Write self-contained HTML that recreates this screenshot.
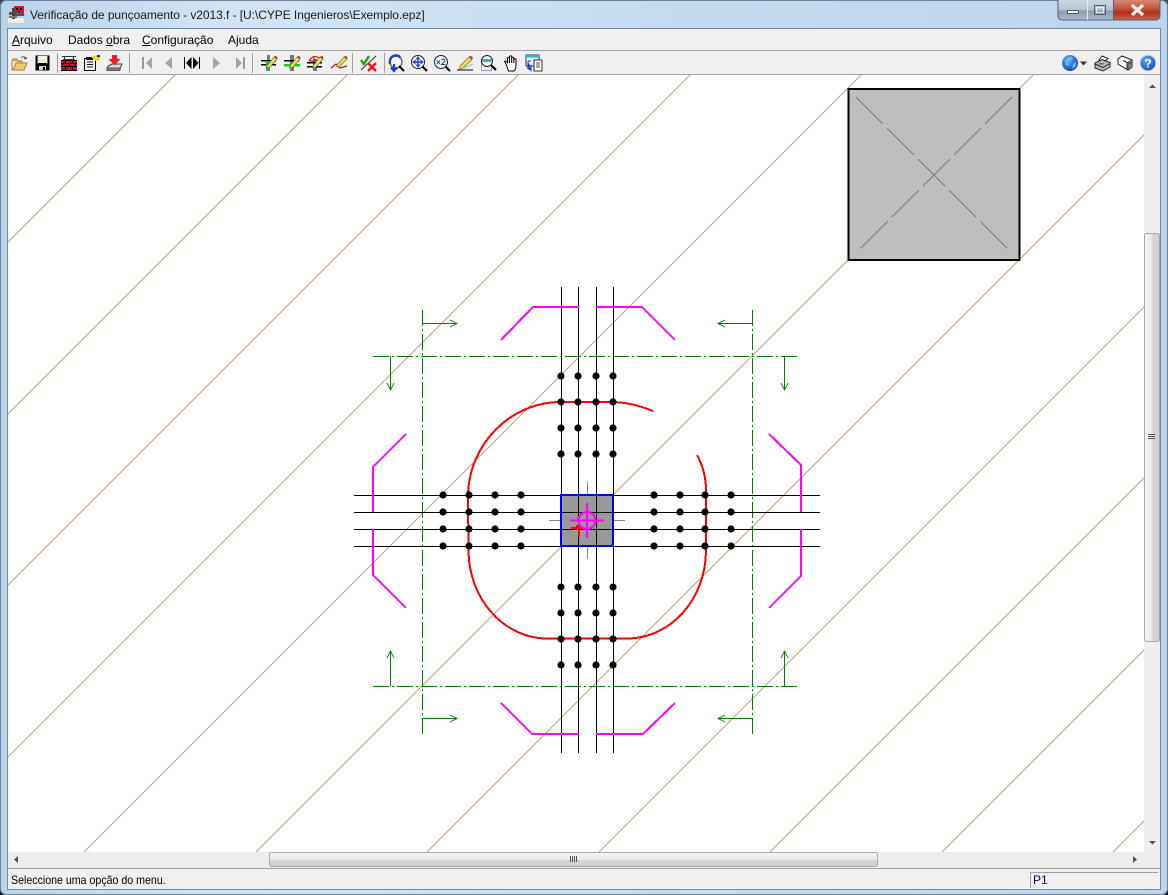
<!DOCTYPE html>
<html><head><meta charset="utf-8"><title>Verificação de punçoamento</title>
<style>
html,body{margin:0;padding:0;width:1168px;height:895px;overflow:hidden;background:#000}
#w{position:absolute;left:0;top:0;width:1168px;height:895px;overflow:hidden;font-family:"Liberation Sans",sans-serif;font-size:12px;color:#000}
.t{position:absolute;white-space:nowrap;line-height:14px}
u{text-decoration:underline}
svg{position:absolute;left:0;top:0}
</style></head><body><div id="w">
<svg width="1168" height="895" viewBox="0 0 1168 895">
<defs>
<linearGradient id="tb" x1="0" x2="1" y1="0" y2="0"><stop offset="0" stop-color="#b9d2ea"/><stop offset=".2" stop-color="#d3e5f5"/><stop offset=".6" stop-color="#c4daef"/><stop offset="1" stop-color="#bdd5ec"/></linearGradient>
<linearGradient id="bt" x1="0" x2="0" y1="0" y2="1"><stop offset="0" stop-color="#cdd7e2"/><stop offset=".5" stop-color="#b4c2d1"/><stop offset=".55" stop-color="#8c9db0"/><stop offset="1" stop-color="#a9bacd"/></linearGradient>
<linearGradient id="cl" x1="0" x2="0" y1="0" y2="1"><stop offset="0" stop-color="#d68a76"/><stop offset=".5" stop-color="#c4472f"/><stop offset=".6" stop-color="#ae2c1a"/><stop offset="1" stop-color="#cf6248"/></linearGradient>
<linearGradient id="th" x1="0" x2="0" y1="0" y2="1"><stop offset="0" stop-color="#f6f6f6"/><stop offset=".5" stop-color="#e8e8e8"/><stop offset=".55" stop-color="#d6d6d6"/><stop offset="1" stop-color="#cfcfcf"/></linearGradient>
<linearGradient id="tv" x1="0" x2="1" y1="0" y2="0"><stop offset="0" stop-color="#f6f6f6"/><stop offset=".5" stop-color="#e8e8e8"/><stop offset=".55" stop-color="#d6d6d6"/><stop offset="1" stop-color="#cfcfcf"/></linearGradient>
<radialGradient id="gl" cx=".4" cy=".3" r=".8"><stop offset="0" stop-color="#5ab0f5"/><stop offset="1" stop-color="#0a3fb0"/></radialGradient>
<clipPath id="cv"><rect x="8" y="75" width="1136" height="777"/></clipPath>
</defs>

<!-- window frame -->
<rect x="0" y="0" width="1168" height="895" rx="6" fill="url(#tb)"/>
<rect x=".5" y=".5" width="1167" height="894" rx="6" fill="none" stroke="#6f8298"/>
<rect x="7" y="28" width="1154" height="862" fill="#6f8ba5"/>
<rect x="8" y="29" width="1152" height="860" fill="#f0f0f0"/>
<!-- canvas -->
<rect x="8" y="75" width="1136" height="777" fill="#fff"/>
<!-- menu/tool separators -->
<g shape-rendering="crispEdges">
<rect x="8" y="50" width="1152" height="1" fill="#a3a3a3"/>
<rect x="8" y="74" width="1152" height="1" fill="#a3a3a3"/>
<rect x="57" y="53" width="1" height="20" fill="#a0a0a0"/>
<rect x="129" y="53" width="1" height="20" fill="#a0a0a0"/>
<rect x="252" y="53" width="1" height="20" fill="#a0a0a0"/>
<rect x="352" y="53" width="1" height="20" fill="#a0a0a0"/>
<rect x="384" y="53" width="1" height="20" fill="#a0a0a0"/>
</g>

<!-- diagonals -->
<g clip-path="url(#cv)" stroke="#c8a27c" stroke-width="1" shape-rendering="crispEdges">
<line x1="175" y1="75" x2="-602" y2="852"/>
<line x1="347" y1="75" x2="-430" y2="852"/>
<line x1="518" y1="75" x2="-259" y2="852"/>
<line x1="690" y1="75" x2="-87" y2="852"/>
<line x1="861" y1="75" x2="84" y2="852"/>
<line x1="1033" y1="75" x2="256" y2="852"/>
<line x1="1204" y1="75" x2="427" y2="852"/>
<line x1="1376" y1="75" x2="599" y2="852"/>
<line x1="1547" y1="75" x2="770" y2="852"/>
<line x1="1719" y1="75" x2="942" y2="852"/>
<line x1="1890" y1="75" x2="1113" y2="852"/>
</g>

<!-- column detail square -->
<rect x="848.5" y="89" width="171" height="171" fill="#bebebe" stroke="#000" stroke-width="2" shape-rendering="crispEdges"/>
<g stroke="#7a7a7a" stroke-width="1" stroke-dasharray="38 6" shape-rendering="crispEdges">
<line x1="856" y1="97" x2="1012" y2="253"/>
<line x1="1012" y1="97" x2="856" y2="253"/>
</g>

<!-- green section lines -->
<g fill="none" stroke="#008000" stroke-width="1" shape-rendering="crispEdges">
<line x1="422.5" y1="310" x2="422.5" y2="736" stroke-dasharray="16 3 2 3"/>
<line x1="752.5" y1="310" x2="752.5" y2="736" stroke-dasharray="16 3 2 3"/>
<line x1="373" y1="356.5" x2="799" y2="356.5" stroke-dasharray="16 3 2 3"/>
<line x1="373" y1="686.5" x2="799" y2="686.5" stroke-dasharray="16 3 2 3"/>
<path d="M422 323.5H457M450 320l7 3.5-7 3.5"/>
<path d="M752 323.5H718M725 320l-7 3.5 7 3.5"/>
<path d="M422 718.5H457M450 715l7 3.5-7 3.5"/>
<path d="M752 718.5H718M725 715l-7 3.5 7 3.5"/>
<path d="M390.500 356V390M387 383l3.500 7 3.500-7"/>
<path d="M784.500 356V390M781 383l3.500 7 3.500-7"/>
<path d="M390.500 686V651M387 658l3.500-7 3.500 7"/>
<path d="M784.500 686V651M781 658l3.500-7 3.500 7"/>
</g>

<!-- column fill -->
<rect x="561" y="495" width="52" height="51" fill="#999" shape-rendering="crispEdges"/>
<!-- black axes -->
<g stroke="#000" stroke-width="1" shape-rendering="crispEdges">
<line x1="561.500" y1="287" x2="561.500" y2="753"/>
<line x1="578.500" y1="287" x2="578.500" y2="753"/>
<line x1="596.500" y1="287" x2="596.500" y2="753"/>
<line x1="613.500" y1="287" x2="613.500" y2="753"/>
<line x1="354" y1="495.500" x2="820" y2="495.500"/>
<line x1="354" y1="512.500" x2="820" y2="512.500"/>
<line x1="354" y1="529.500" x2="820" y2="529.500"/>
<line x1="354" y1="546.500" x2="820" y2="546.500"/>
</g>

<!-- red punching perimeter -->
<g fill="none" stroke="#f00" stroke-width="2" shape-rendering="crispEdges">
<path d="M653 411C640 406 628 402 610 402L561 402C510 402 468 445 468 497L468.500 550C468.500 600 505 638.500 547 638.500H627C670 638.500 706 600 706 550V490C706 478 703 466 697 455"/>
</g>

<!-- black dots -->
<g fill="#000">
<circle cx="561" cy="376" r="3.600"/><circle cx="578" cy="376" r="3.600"/><circle cx="596" cy="376" r="3.600"/><circle cx="613" cy="376" r="3.600"/>
<circle cx="561" cy="402" r="3.600"/><circle cx="578" cy="402" r="3.600"/><circle cx="596" cy="402" r="3.600"/><circle cx="613" cy="402" r="3.600"/>
<circle cx="561" cy="428" r="3.600"/><circle cx="578" cy="428" r="3.600"/><circle cx="596" cy="428" r="3.600"/><circle cx="613" cy="428" r="3.600"/>
<circle cx="561" cy="454" r="3.600"/><circle cx="578" cy="454" r="3.600"/><circle cx="596" cy="454" r="3.600"/><circle cx="613" cy="454" r="3.600"/>
<circle cx="561" cy="587" r="3.600"/><circle cx="578" cy="587" r="3.600"/><circle cx="596" cy="587" r="3.600"/><circle cx="613" cy="587" r="3.600"/>
<circle cx="561" cy="613" r="3.600"/><circle cx="578" cy="613" r="3.600"/><circle cx="596" cy="613" r="3.600"/><circle cx="613" cy="613" r="3.600"/>
<circle cx="561" cy="639" r="3.600"/><circle cx="578" cy="639" r="3.600"/><circle cx="596" cy="639" r="3.600"/><circle cx="613" cy="639" r="3.600"/>
<circle cx="561" cy="665" r="3.600"/><circle cx="578" cy="665" r="3.600"/><circle cx="596" cy="665" r="3.600"/><circle cx="613" cy="665" r="3.600"/>
<circle cx="443" cy="495" r="3.600"/><circle cx="469" cy="495" r="3.600"/><circle cx="495" cy="495" r="3.600"/><circle cx="521" cy="495" r="3.600"/>
<circle cx="443" cy="512" r="3.600"/><circle cx="469" cy="512" r="3.600"/><circle cx="495" cy="512" r="3.600"/><circle cx="521" cy="512" r="3.600"/>
<circle cx="443" cy="529" r="3.600"/><circle cx="469" cy="529" r="3.600"/><circle cx="495" cy="529" r="3.600"/><circle cx="521" cy="529" r="3.600"/>
<circle cx="443" cy="546" r="3.600"/><circle cx="469" cy="546" r="3.600"/><circle cx="495" cy="546" r="3.600"/><circle cx="521" cy="546" r="3.600"/>
<circle cx="654" cy="495" r="3.600"/><circle cx="680" cy="495" r="3.600"/><circle cx="705" cy="495" r="3.600"/><circle cx="731" cy="495" r="3.600"/>
<circle cx="654" cy="512" r="3.600"/><circle cx="680" cy="512" r="3.600"/><circle cx="705" cy="512" r="3.600"/><circle cx="731" cy="512" r="3.600"/>
<circle cx="654" cy="529" r="3.600"/><circle cx="680" cy="529" r="3.600"/><circle cx="705" cy="529" r="3.600"/><circle cx="731" cy="529" r="3.600"/>
<circle cx="654" cy="546" r="3.600"/><circle cx="680" cy="546" r="3.600"/><circle cx="705" cy="546" r="3.600"/><circle cx="731" cy="546" r="3.600"/>
</g>

<!-- magenta outlines -->
<g fill="none" stroke="#f0f" stroke-width="2" shape-rendering="crispEdges">
<path d="M501 340L533 307H579"/>
<path d="M596 307H642L675 340"/>
<path d="M501 703L532 734H579"/>
<path d="M596 734H643L675 703"/>
<path d="M406 434L373 467V512"/>
<path d="M373 529V575L406 608"/>
<path d="M769 434L801 465V512"/>
<path d="M801 529V576L769 608"/>
</g>

<!-- gray centre cross -->
<g stroke="#888" stroke-width="1" shape-rendering="crispEdges">
<line x1="587.500" y1="482" x2="587.500" y2="495"/>
<line x1="587.500" y1="547" x2="587.500" y2="559"/>
<line x1="549" y1="520.500" x2="561" y2="520.500"/>
<line x1="614" y1="520.500" x2="625" y2="520.500"/>
</g>
<!-- blue column outline -->
<rect x="561" y="495" width="52" height="51" fill="none" stroke="#00f" stroke-width="2" shape-rendering="crispEdges"/>
<!-- red marker -->
<g stroke="#f00" stroke-width="2" fill="none" shape-rendering="crispEdges">
<path d="M571 528H582M579 523V537"/>
<circle cx="578.500" cy="527.500" r="2"/>
</g>
<!-- magenta crosshair -->
<g stroke="#f0f" stroke-width="2" fill="none">
<circle cx="587" cy="520.500" r="8.500"/>
<path d="M570 520.500H604M587 503V538" shape-rendering="crispEdges"/>
</g>

<!-- scrollbars -->
<rect x="1144" y="75" width="16" height="777" fill="#efefef" shape-rendering="crispEdges"/>
<rect x="8" y="852" width="1152" height="16" fill="#ededed" shape-rendering="crispEdges"/>
<rect x="8" y="868" width="1152" height="1" fill="#a0a0a0" shape-rendering="crispEdges"/>
<rect x="1144.500" y="233.500" width="15" height="408" rx="2" fill="url(#tv)" stroke="#a8a8a8"/>
<rect x="269.500" y="852.500" width="608" height="14" rx="2" fill="url(#th)" stroke="#a8a8a8"/>
<g fill="#555" shape-rendering="crispEdges">
<rect x="1148" y="434" width="7" height="1"/><rect x="1148" y="436" width="7" height="1"/><rect x="1148" y="438" width="7" height="1"/>
<rect x="570" y="856" width="1" height="6"/><rect x="572" y="856" width="1" height="6"/><rect x="574" y="856" width="1" height="6"/><rect x="576" y="856" width="1" height="6"/>
</g>
<g fill="#505050">
<path d="M1149 88L1152.500 84.500L1156 88Z"/>
<path d="M1149 841L1152.500 844.500L1156 841Z"/>
<path d="M18 856L14 859.500L18 863Z"/>
<path d="M1133 856L1137 859.500L1133 863Z"/>
</g>
<!-- status panel -->
<g fill="#a0a0a0" shape-rendering="crispEdges">
<rect x="1030" y="872" width="128" height="1"/>
<rect x="1030" y="872" width="1" height="16"/>
</g>

<!-- window buttons -->
<path d="M1058 0H1113V20H1063Q1058 20 1058 15Z" fill="url(#bt)"/>
<path d="M1113 0H1160V15Q1160 20 1155 20H1113Z" fill="url(#cl)"/>
<path d="M1058 0V15Q1058 20 1063 20H1155Q1160 20 1160 15V0" fill="none" stroke="#55626f"/>
<rect x="1087" y="0" width="1" height="20" fill="#e4ebf2"/>
<rect x="1113" y="0" width="1" height="20" fill="#55626f"/>
<rect x="1067.500" y="10.500" width="11" height="3" fill="#f3f5f7" stroke="#4e5d6e"/>
<rect x="1094.500" y="5.500" width="11" height="9" fill="none" stroke="#4e5d6e" stroke-width="1"/>
<rect x="1096.500" y="7.500" width="7" height="5" fill="none" stroke="#e8edf2"/>
<path d="M1132 5L1143 15M1143 5L1132 15" stroke="#f4ece8" stroke-width="3.400" fill="none"/>

<!-- app icon -->
<g shape-rendering="crispEdges">
<rect x="8" y="18" width="16" height="5" fill="#eee"/>
<rect x="14" y="6" width="10" height="10" fill="#c02030"/>
<rect x="16" y="8" width="2" height="2" fill="#000"/><rect x="20" y="8" width="2" height="2" fill="#000"/><rect x="18" y="11" width="2" height="2" fill="#000"/>
<rect x="9" y="12" width="12" height="3" fill="#555"/>
<rect x="12" y="8" width="3" height="11" fill="#444"/>
<rect x="9" y="16" width="8" height="2" fill="#777"/>
</g>

<!-- toolbar icons -->
<!-- open -->
<g transform="translate(11,55)">
<path d="M1 6V15H13L16 8H5L2 15" fill="#eecb74" stroke="#a5813a"/>
<path d="M1 6L2 4H6L7 6H11V8" fill="#e0b860" stroke="#a5813a"/>
<path d="M10 3Q13 0 15 4M15 4L13 3.500M15 4L15.500 2" fill="none" stroke="#555"/>
</g>
<!-- save -->
<g transform="translate(35,55)" shape-rendering="crispEdges">
<rect x=".5" y=".5" width="14" height="15" fill="#000"/>
<rect x="3" y="1" width="9" height="7" fill="#f1efdc"/>
<rect x="2" y="1" width="1" height="8" fill="#6f6f20"/><rect x="12" y="1" width="1" height="8" fill="#6f6f20"/>
<rect x="4" y="11" width="7" height="4" fill="#cfcfcf"/>
<rect x="8" y="12" width="2" height="3" fill="#000"/>
</g>
<!-- bricks -->
<g transform="translate(61,55)" shape-rendering="crispEdges">
<rect x="0" y="5" width="16" height="11" fill="#c8141c"/>
<path d="M0 5.500H16M0 8.500H16M0 11.500H16M0 15.500H16M4.500 5V8M11.500 5V8M8.500 8V11M1.500 8V11M14.500 8V11M4.500 11V15M11.500 11V15" stroke="#000" fill="none"/>
<path d="M2 4.500H14M3.500 1V5M12.500 1V5M1 1.500H15" stroke="#333" fill="none"/>
</g>
<!-- clipboard -->
<g transform="translate(84,55)" shape-rendering="crispEdges">
<rect x=".5" y="3.500" width="11" height="12" fill="#fff" stroke="#000"/>
<path d="M3 7H9M3 9.500H9M3 12H9" stroke="#000" fill="none"/>
<rect x="2" y="2" width="7" height="3" fill="#000"/>
<path d="M7 2L12 0H16V5L12 6Z" fill="#f5d41c"/>
<rect x="13" y="0" width="3" height="2" fill="#1a2f90"/>
</g>
<!-- download -->
<g transform="translate(106,55)">
<path d="M2 11L6 9H16L14 14H1Z" fill="#d9d9d9" stroke="#444"/>
<path d="M1 13H14V15.500H1Z" fill="#8a8a8a" stroke="#333" stroke-width=".8"/>
<path d="M6 0H11V4H14.500L8.500 10.500L2.500 4H6Z" fill="#ec1c24"/>
</g>
<!-- nav -->
<g shape-rendering="crispEdges">
<rect x="142" y="57" width="2" height="12" fill="#999"/>
<path d="M152 57V69L146 63Z" fill="#a4a4a4" shape-rendering="auto"/>
<path d="M172 57V69L165 63Z" fill="#a4a4a4" shape-rendering="auto"/>
<rect x="184" y="57" width="1" height="12" fill="#000"/>
<path d="M191.500 57V69L186 63Z" fill="#000" shape-rendering="auto"/>
<path d="M193 57V69L198.500 63Z" fill="#000" shape-rendering="auto"/>
<rect x="199" y="57" width="1" height="12" fill="#000"/>
<path d="M213 57V69L220 63Z" fill="#a4a4a4" shape-rendering="auto"/>
<path d="M236 57V69L242 63Z" fill="#a4a4a4" shape-rendering="auto"/>
<rect x="243" y="57" width="2" height="12" fill="#999"/>
</g>
<!-- column pencil icons -->
<g transform="translate(261,55)">
<path d="M6 0V16H9V0" fill="#777"/><rect x="0" y="5" width="15" height="1.500" fill="#000"/><rect x="0" y="9" width="15" height="1.500" fill="#000"/>
<path d="M5 6H10V11H8V16H5Z" fill="#10c020"/>
<path d="M6 11L13 2L16 4L9 12L5.500 13Z" fill="#f3e34a" stroke="#555" stroke-width=".6"/><path d="M13 2L14.500 0.500L16.500 2.500L16 4Z" fill="#d02020"/>
</g>
<g transform="translate(284,55)">
<path d="M6 0V16H10V0" fill="#777"/><rect x="0" y="5" width="15" height="1.500" fill="#000"/><rect x="0" y="9" width="16" height="2.500" fill="#14d014"/>
<path d="M6 11L13 2L16 4L9 12L5.500 13Z" fill="#f3e34a" stroke="#555" stroke-width=".6"/><path d="M13 2L14.500 0.500L16.500 2.500L16 4Z" fill="#d02020"/>
</g>
<g transform="translate(307,55)">
<path d="M6 4V16H10V4" fill="#777"/><rect x="0" y="7" width="15" height="1.500" fill="#000"/><rect x="0" y="11" width="15" height="1.500" fill="#000"/>
<path d="M2 6Q7 -2 13 4M2 6H14M7 1V6" fill="none" stroke="#e01818" stroke-width="1.200"/>
<path d="M6 11L13 2L16 4L9 12L5.500 13Z" fill="#f3e34a" stroke="#555" stroke-width=".6"/><path d="M13 2L14.500 0.500L16.500 2.500L16 4Z" fill="#d02020"/>
</g>
<g transform="translate(331,55)">
<path d="M0 13L5 9L9 13L16 11" fill="none" stroke="#a01818" stroke-width="1.200"/>
<path d="M6 10L13 2L16 4L9 11L5.500 12Z" fill="#f3e34a" stroke="#555" stroke-width=".6"/><path d="M13 2L14.500 0.500L16.500 2.500L16 4Z" fill="#d02020"/>
</g>
<!-- check/x -->
<g transform="translate(360,55)" fill="none">
<path d="M1 15L16 1" stroke="#333" stroke-width="1"/>
<path d="M1 5L4 9L9 1" stroke="#18a818" stroke-width="2.400"/>
<path d="M8 8L16 16M16 8L8 16" stroke="#e81818" stroke-width="2.400"/>
</g>
<!-- zoom icons -->
<g transform="translate(388,55)" fill="none">
<circle cx="8" cy="7" r="6" fill="#fff" stroke="#333"/>
<path d="M2 9Q1 1 8 0.500Q13 1 11 3" stroke="#1a3fd8" stroke-width="2.400"/>
<path d="M6 9V15M3 12.500L6 16L9 12.500" stroke="#1a3fd8" stroke-width="2.200"/>
<path d="M11 11L16 16" stroke="#000" stroke-width="2"/>
</g>
<g transform="translate(411,55)" fill="none">
<circle cx="7" cy="7" r="6.500" fill="#fff" stroke="#222"/>
<path d="M7 2.500V11.500M2.500 7H11.500" stroke="#1a3fd8" stroke-width="1.400"/>
<path d="M5.500 4L7 2L8.500 4ZM5.500 10L7 12L8.500 10ZM4 5.500L2 7L4 8.500ZM10 5.500L12 7L10 8.500Z" fill="#1a3fd8" stroke="#1a3fd8"/>
<path d="M11.500 11.500L16 16" stroke="#000" stroke-width="2"/>
</g>
<g transform="translate(434,55)" fill="none">
<circle cx="7" cy="7" r="6.500" fill="#eef6fb" stroke="#222"/>
<path d="M3 5.500L6 9M6 5.500L3 9" stroke="#206080"/>
<path d="M7.500 5Q10.500 3 11 5.500Q10.500 7 7.500 9.500H11.500" stroke="#1a3f8a"/>
<path d="M11.500 11.500L16 16" stroke="#000" stroke-width="2"/>
</g>
<g transform="translate(457,55)">
<path d="M3 11L12 2L15 4.500L6 13L2.500 14Z" fill="#f3df3a" stroke="#555" stroke-width=".6"/>
<path d="M12 2L13.500 .5L16 2.500L15 4.500Z" fill="#d83020"/>
<path d="M7 13L16 9" stroke="#bbb" stroke-width="1.500"/>
<path d="M0 15H16" stroke="#000"/>
</g>
<g transform="translate(480,55)" fill="none">
<rect x="1.500" y="7.500" width="10" height="8" stroke="#2244cc" stroke-dasharray="1 1"/>
<circle cx="7" cy="6" r="5.500" fill="#e8f6f8" stroke="#222"/>
<rect x="2.500" y="4" width="9" height="3" fill="#48b0b8"/>
<path d="M11 10L16 15" stroke="#000" stroke-width="2"/>
</g>
<g transform="translate(503,55)">
<path d="M3 9L1.500 6.500Q3 5.500 4.500 7.500V3Q5.500 1.500 6.500 3V1.500Q7.700 0 8.700 1.500V2.500Q10 1.500 10.800 3V4Q12 3 13 4.500V10.500Q13 14 11 16H5.500Z" fill="#fff" stroke="#000"/>
<path d="M6.500 3V8M8.700 2.500V8M10.800 4V8" stroke="#000" fill="none"/>
</g>
<g transform="translate(526,55)" shape-rendering="crispEdges">
<rect x="0" y="0" width="13" height="11" fill="#e8f6fa" stroke="#333" stroke-width=".6"/>
<rect x="0" y="0" width="13" height="2.500" fill="#20b8d8"/>
<rect x="8" y="5" width="8" height="11" fill="#fff" stroke="#333"/>
<path d="M10 8H14M10 10H14M10 12H14" stroke="#555"/>
<path d="M2 6V13H5M2 6H5M5 10.500V15.500L1.500 13Z" fill="#1a3fd8" stroke="#1a3fd8"/>
</g>
<!-- right icons -->
<circle cx="1070" cy="63" r="8" fill="url(#gl)"/>
<path d="M1065 60Q1069 56 1073 57L1071 61L1068 62L1069 66L1066 65ZM1073 64L1076 62L1076 66L1072 69Z" fill="#6fb5ee"/>
<path d="M1080 61.500H1087L1083.500 65.500Z" fill="#333"/>
<g transform="translate(1094,55)">
<path d="M8 1L14 3.500L10 7L5 5Z" fill="#fff" stroke="#222"/>
<path d="M1 8L8 4.500L16 7.500V12L9 16L1 13Z" fill="#bbb" stroke="#222"/>
<path d="M1 9L9 12.500L16 8.500" fill="none" stroke="#222"/>
<rect x="5" y="8" width="2.500" height="1.500" fill="#e03030"/><rect x="7.500" y="8" width="2.500" height="1.500" fill="#30b030"/>
</g>
<g transform="translate(1117,55)">
<path d="M1 4L5 1L15 5V12L11 15L1 9Z" fill="#fff" stroke="#222"/>
<path d="M6 5.500L10 7.500V14.500" fill="none" stroke="#222"/>
<path d="M11 7L15 5V12L11 15Z" fill="#888" stroke="#222" stroke-width=".6"/>
<rect x="12" y="7.500" width="2" height="2" fill="#b03030"/>
</g>
<circle cx="1148" cy="63" r="7.800" fill="url(#gl)" stroke="#c8c8d8"/>
<text x="1148" y="67.500" font-family="Liberation Sans" font-weight="700" font-size="12" fill="#fff" text-anchor="middle">?</text>

<!-- corners -->
<path d="M0 0H4Q1 1 0 4Z" fill="#3a4a5a"/><path d="M1168 0H1164Q1167 1 1168 4Z" fill="#3a4a5a"/>
<path d="M0 895H5Q1 894 0 890Z" fill="#111"/><path d="M1168 895H1163Q1167 894 1168 890Z" fill="#111"/>
</svg>

<div class="t" style="left:30px;top:8px;color:#1a1a1a;letter-spacing:-.06px">Verificação de punçoamento - v2013.f - [U:\CYPE Ingenieros\Exemplo.epz]</div>
<div class="t" style="left:12px;top:33px"><u>A</u>rquivo</div>
<div class="t" style="left:68px;top:33px">Dados <u>o</u>bra</div>
<div class="t" style="left:142px;top:33px"><u>C</u>onfiguração</div>
<div class="t" style="left:228px;top:33px">Ajuda</div>
<div class="t" style="left:11px;top:873px;transform:scaleX(.885);transform-origin:0 0">Seleccione uma opção do menu.</div>
<div class="t" style="left:1033px;top:873px;color:#000060">P1</div>
</div></body></html>
